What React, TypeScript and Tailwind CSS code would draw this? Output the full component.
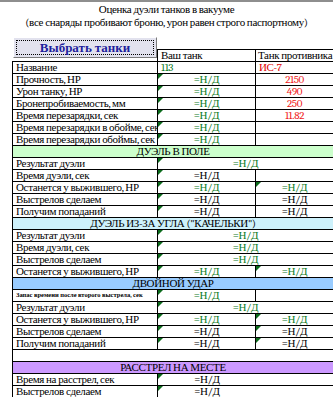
import type { ReactNode } from 'react'

type Cell = {
  text?: string
  color?: string
  tri?: boolean
  left?: boolean
}

type RowDef =
  | { kind: 'pair'; label: string; small?: boolean; a: Cell; b: Cell; open?: boolean }
  | { kind: 'merge'; label: string; a: Cell }
  | { kind: 'section'; title: string; bg: string }
  | { kind: 'blank' }

const GREEN = '#0a7a1e'
const RED = '#f01818'

const g = (tri = true): Cell => ({ text: '=Н/Д', color: GREEN, tri })
const k = (tri = true): Cell => ({ text: '=Н/Д', color: '#000', tri })
const r = (text: string): Cell => ({ text, color: RED })
const none: Cell = {}

const rows: RowDef[] = [
  { kind: 'pair', label: 'Название', a: { text: '113', color: GREEN, left: true }, b: { text: 'ИС-7', color: '#e00000', left: true } },
  { kind: 'pair', label: 'Прочность, НР', a: g(), b: r('2150') },
  { kind: 'pair', label: 'Урон танку, НР', a: g(), b: r('490') },
  { kind: 'pair', label: 'Бронепробиваемость, мм', a: g(), b: r('250') },
  { kind: 'pair', label: 'Время перезарядки, сек', a: g(), b: r('11.82') },
  { kind: 'pair', label: 'Время перезарядки в обойме, сек', a: g(), b: none },
  { kind: 'pair', label: 'Время перезарядки обоймы, сек', a: g(), b: none },

  { kind: 'section', title: 'ДУЭЛЬ В ПОЛЕ', bg: 'bg-[#ccffcc]' },
  { kind: 'merge', label: 'Результат дуэли', a: g() },
  { kind: 'pair', label: 'Время дуэли, сек', a: k(), b: none },
  { kind: 'pair', label: 'Останется у выжившего, НР', a: g(), b: g() },
  { kind: 'pair', label: 'Выстрелов сделаем', a: k(), b: k(false) },
  { kind: 'pair', label: 'Получим попаданий', a: k(), b: k(false) },

  { kind: 'section', title: 'ДУЭЛЬ ИЗ-ЗА УГЛА ("КАЧЕЛЬКИ")', bg: 'bg-[#cdf1fb]' },
  { kind: 'merge', label: 'Результат дуэли', a: g() },
  { kind: 'merge', label: 'Время дуэли, сек', a: g() },
  { kind: 'merge', label: 'Выстрелов сделаем', a: g() },
  { kind: 'pair', label: 'Останется у выжившего, НР', a: g(), b: g() },

  { kind: 'section', title: 'ДВОЙНОЙ УДАР', bg: 'bg-[#99ccff]' },
  { kind: 'pair', label: 'Запас времени после второго выстрела, сек', small: true, a: g(), b: none },
  { kind: 'merge', label: 'Результат дуэли', a: g() },
  { kind: 'pair', label: 'Останется у выжившего, НР', a: g(), b: g() },
  { kind: 'pair', label: 'Выстрелов сделаем', a: k(), b: k() },
  { kind: 'pair', label: 'Получим попаданий', a: k(), b: k() },

  { kind: 'blank' },
  { kind: 'section', title: 'РАССТРЕЛ НА МЕСТЕ', bg: 'bg-[#cc99ff]' },
  { kind: 'pair', label: 'Время на расстрел, сек', a: k(), b: none, open: true },
  { kind: 'pair', label: 'Выстрелов сделаем', a: k(), b: none, open: true },
]

function Tri() {
  return (
    <span className="absolute left-0 top-0 h-0 w-0 border-t-[5px] border-r-[5px] border-t-[#0b6b1b] border-r-transparent" />
  )
}

function Value({ cell, className }: { cell: Cell; className: string }) {
  return (
    <div
      className={`relative flex h-full items-center ${cell.left ? 'justify-start pl-[3px]' : 'justify-center'} ${className}`}
      style={{ color: cell.color }}
    >
      {cell.tri && <Tri />}
      {cell.text}
    </div>
  )
}

function Label({ children, small }: { children: ReactNode; small?: boolean }) {
  return (
    <div
      className={`flex h-full w-[145px] shrink-0 items-center overflow-hidden whitespace-nowrap border-r border-black pl-[3px] ${
        small ? 'text-[6.5px] font-bold tracking-normal' : ''
      }`}
    >
      {children}
    </div>
  )
}

function TableRow({ row }: { row: RowDef }) {
  const base = 'flex h-[12px] border-b border-black'
  if (row.kind === 'section') {
    return (
      <div className={`${base} items-center justify-center whitespace-nowrap ${row.bg}`}>
        {row.title}
      </div>
    )
  }
  if (row.kind === 'blank') return <div className={base} />
  if (row.kind === 'merge') {
    return (
      <div className={base}>
        <Label>{row.label}</Label>
        <Value cell={row.a} className="flex-1" />
      </div>
    )
  }
  return (
    <div className={base}>
      <Label small={row.small}>{row.label}</Label>
      <Value cell={row.a} className={`w-[98px] shrink-0 ${row.open ? '' : 'border-r border-black'}`} />
      <Value cell={row.b} className="flex-1" />
    </div>
  )
}

export default function App() {
  return (
    <div className="h-[397px] w-[333px] overflow-hidden border-t-2 border-[#8e8e8e] bg-white font-serif text-[11px] leading-[11px] tracking-[-0.35px] text-black">
      {/* заголовок */}
      <div className="flex flex-col items-center pt-[1px] leading-[13px]">
        <div>Оценка дуэли танков в вакууме</div>
        <div>(все снаряды пробивают броню, урон равен строго паспортному)</div>
      </div>

      {/* кнопка + шапка таблицы */}
      <div className="ml-[12px] mt-[8px] flex items-end">
        <div className="w-[145px] shrink-0 pb-[3px] pl-[1px]">
          <div className="h-[21px] border border-t-white border-l-white border-r-[#7a7a7a] border-b-[#7a7a7a] bg-[#e2e2ee] p-[2px]">
            <div className="flex h-full items-center justify-center border border-dotted border-black text-[13px] font-bold tracking-normal text-[#1f1f9c]">
              Выбрать танки
            </div>
          </div>
        </div>
        <div className="flex h-[12px] flex-1 whitespace-nowrap border-t border-black">
          <div className="flex w-[99px] shrink-0 items-center border-x border-black pl-[3px]">Ваш танк</div>
          <div className="flex flex-1 items-center pl-[2px]">Танк противника</div>
        </div>
      </div>

      {/* таблица */}
      <div className="ml-[12px] border-l border-t border-black">
        {rows.map((row, i) => (
          <TableRow key={i} row={row} />
        ))}
      </div>
    </div>
  )
}
